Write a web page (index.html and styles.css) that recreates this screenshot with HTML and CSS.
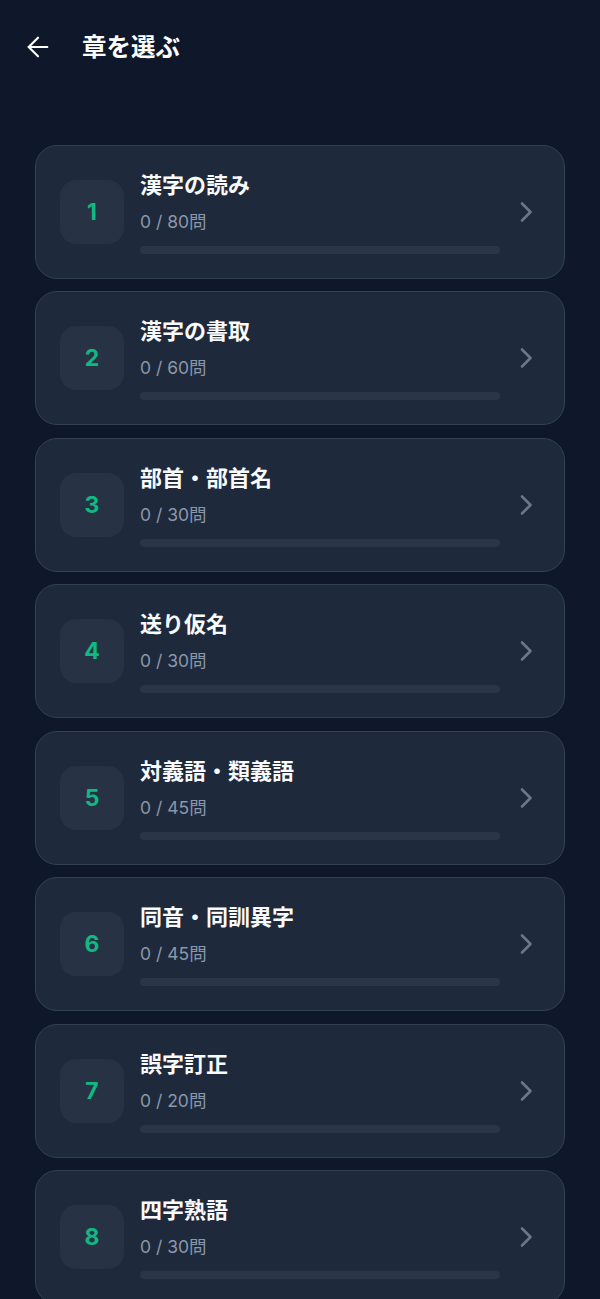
FILE: index.html
```html
<!DOCTYPE html>
<html lang="ja">
<head>
<meta charset="utf-8">
<title>章を選ぶ</title>
<link rel="stylesheet" href="styles.css">
</head>
<body>
<div class="app">
  <header class="header">
    <button class="back" aria-label="戻る">
      <svg width="32" height="32" viewBox="0 0 24 24" fill="none" stroke="currentColor" stroke-width="1.6" stroke-linecap="round" stroke-linejoin="round"><path d="m12 19-7-7 7-7"/><path d="M19 12H5"/></svg>
    </button>
    <h1 class="title">章を選ぶ</h1>
  </header>
  <main class="list">
    <div class="card"><div class="num">1</div><div class="info"><div class="name">漢字の読み</div><div class="count">0 / 80問</div><div class="bar"></div></div><svg class="chev" width="24" height="24" viewBox="0 0 24 24" fill="none" stroke="currentColor" stroke-width="2.6" stroke-linecap="round" stroke-linejoin="round"><path d="M6 3.5 14.5 12 6 20.5"/></svg></div>
    <div class="card"><div class="num">2</div><div class="info"><div class="name">漢字の書取</div><div class="count">0 / 60問</div><div class="bar"></div></div><svg class="chev" width="24" height="24" viewBox="0 0 24 24" fill="none" stroke="currentColor" stroke-width="2.6" stroke-linecap="round" stroke-linejoin="round"><path d="M6 3.5 14.5 12 6 20.5"/></svg></div>
    <div class="card"><div class="num">3</div><div class="info"><div class="name">部首・部首名</div><div class="count">0 / 30問</div><div class="bar"></div></div><svg class="chev" width="24" height="24" viewBox="0 0 24 24" fill="none" stroke="currentColor" stroke-width="2.6" stroke-linecap="round" stroke-linejoin="round"><path d="M6 3.5 14.5 12 6 20.5"/></svg></div>
    <div class="card"><div class="num">4</div><div class="info"><div class="name">送り仮名</div><div class="count">0 / 30問</div><div class="bar"></div></div><svg class="chev" width="24" height="24" viewBox="0 0 24 24" fill="none" stroke="currentColor" stroke-width="2.6" stroke-linecap="round" stroke-linejoin="round"><path d="M6 3.5 14.5 12 6 20.5"/></svg></div>
    <div class="card"><div class="num">5</div><div class="info"><div class="name">対義語・類義語</div><div class="count">0 / 45問</div><div class="bar"></div></div><svg class="chev" width="24" height="24" viewBox="0 0 24 24" fill="none" stroke="currentColor" stroke-width="2.6" stroke-linecap="round" stroke-linejoin="round"><path d="M6 3.5 14.5 12 6 20.5"/></svg></div>
    <div class="card"><div class="num">6</div><div class="info"><div class="name">同音・同訓異字</div><div class="count">0 / 45問</div><div class="bar"></div></div><svg class="chev" width="24" height="24" viewBox="0 0 24 24" fill="none" stroke="currentColor" stroke-width="2.6" stroke-linecap="round" stroke-linejoin="round"><path d="M6 3.5 14.5 12 6 20.5"/></svg></div>
    <div class="card"><div class="num">7</div><div class="info"><div class="name">誤字訂正</div><div class="count">0 / 20問</div><div class="bar"></div></div><svg class="chev" width="24" height="24" viewBox="0 0 24 24" fill="none" stroke="currentColor" stroke-width="2.6" stroke-linecap="round" stroke-linejoin="round"><path d="M6 3.5 14.5 12 6 20.5"/></svg></div>
    <div class="card"><div class="num">8</div><div class="info"><div class="name">四字熟語</div><div class="count">0 / 30問</div><div class="bar"></div></div><svg class="chev" width="24" height="24" viewBox="0 0 24 24" fill="none" stroke="currentColor" stroke-width="2.6" stroke-linecap="round" stroke-linejoin="round"><path d="M6 3.5 14.5 12 6 20.5"/></svg></div>
  </main>
</div>
</body>
</html>
```

FILE: styles.css
```css
* { box-sizing: border-box; }
html, body {
  margin: 0;
  padding: 0;
  background: #0f172a;
}
body {
  font-family: "Inter", "Noto Sans CJK JP", sans-serif;
  color: #f1f5f9;
}
.app {
  min-height: 1299px;
  background: #0f172a;
}
.header {
  height: 94px;
  display: flex;
  align-items: center;
  padding-left: 22px;
}
.back {
  background: none;
  border: none;
  padding: 0;
  margin: 0;
  width: 32px;
  height: 32px;
  color: #ffffff;
  display: flex;
  align-items: center;
  justify-content: center;
  cursor: pointer;
}
.title {
  margin: 0 0 0 28px;
  font-size: 24.5px;
  font-weight: 700;
  color: #ffffff;
  line-height: 32px;
}
.list {
  padding: 51px 35px 24px;
  display: flex;
  flex-direction: column;
  gap: 12.45px;
}
.card {
  display: flex;
  align-items: center;
  gap: 16px;
  padding: 24px;
  background: #1e293b;
  border: 1px solid #334155;
  border-radius: 22px;
}
.num {
  flex: none;
  width: 64px;
  height: 64px;
  border-radius: 16px;
  background: #273345;
  color: #10b981;
  font-size: 23px;
  font-weight: 700;
  display: flex;
  align-items: center;
  justify-content: center;
}
.info {
  flex: 1;
  min-width: 0;
}
.name {
  font-size: 22px;
  font-weight: 700;
  line-height: 30px;
  color: #f8fafc;
}
.count {
  margin-top: 10px;
  font-size: 17.5px;
  line-height: 24px;
  color: #8b97aa;
}
.bar {
  margin-top: 12px;
  height: 8px;
  border-radius: 4px;
  background: #2a3648;
}
.chev {
  flex: none;
  color: #6b7789;
}
```
